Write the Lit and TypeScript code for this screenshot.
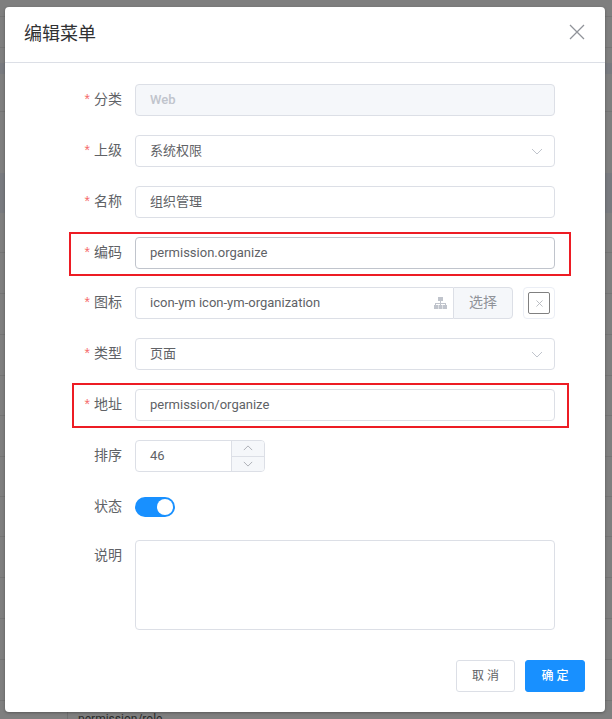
import { LitElement, html, css, svg } from "lit";
import { customElement } from "lit/decorators.js";

const chevronDown = svg`<path d="M1 1l5 5 5-5" fill="none" stroke="currentColor" stroke-width="1"/>`;
const chevronUp = svg`<path d="M1 6l5-5 5 5" fill="none" stroke="currentColor" stroke-width="1"/>`;

/* Rows of the table behind the modal mask: [height, tone] */
const backdropRows: [number, string][] = [
  [17, ""], [31, ""], [15, "plain"], [11, "band"], [38, ""], [61, "plain"], [40, "band"],
  [40, ""], [41, ""], [41, ""], [41, ""], [40, ""], [41, ""], [40, ""], [40, ""], [41, ""],
  [41, ""], [41, ""], [41, ""],
];

@customElement("app-root")
export class AppRoot extends LitElement {
  static styles = css`
    :host {
      display: block;
      position: relative;
      width: 612px;
      height: 719px;
      overflow: hidden;
      background: #7f7f7f;
      font-family: Roboto, "Noto Sans CJK SC", sans-serif;
      font-size: 14px;
      color: #606266;
    }
    * { box-sizing: border-box; }
    .backdrop { display: flex; flex-direction: column; }
    .bg-row { border-bottom: 1px solid #757575; flex: none; }
    .bg-row.plain { border-bottom: none; }
    .bg-row.band { background: #787a7f; border-bottom: none; }
    .bg-text {
      position: absolute; left: 67px; top: 700px; height: 40px;
      border-left: 1px solid #707070;
      padding: 9px 0 0 10px; color: #2a2a2a; font-size: 12px; line-height: 20px;
    }
    .dialog {
      position: absolute; left: 5px; top: 7px; width: 600px; height: 705px;
      background: #fff; border-radius: 4px;
      box-shadow: 0 1px 3px rgba(0, 0, 0, .3);
      display: flex; flex-direction: column;
    }
    .head {
      height: 56px; flex: none; border-bottom: 1px solid #dcdfe6;
      display: flex; align-items: center; justify-content: space-between;
      padding: 0 20px 6px 19px;
    }
    .title { font-size: 18px; line-height: 24px; color: #303133; position: relative; top: 2px; }
    .close { width: 16px; height: 16px; color: #909399; display: block; }
    .form {
      flex: 1; padding: 21px 50px 0 70px;
      display: flex; flex-direction: column; gap: 19px;
    }
    .row { display: flex; align-items: center; min-height: 32px; }
    .row.tight { margin-top: -1px; }
    .label {
      width: 60px; flex: none; padding-right: 13px; text-align: right;
      line-height: 30px; white-space: nowrap; align-self: flex-start;
    }
    .req { color: #f56c6c; margin-right: 4px; font-family: "Liberation Sans", sans-serif; }
    .input {
      flex: 1; min-width: 0; height: 32px; border: 1px solid #dcdfe6; border-radius: 4px;
      padding: 0 15px 0 14px; display: flex; align-items: center; justify-content: space-between;
      font-size: 13px; line-height: 28px; background: #fff; white-space: nowrap;
    }
    .input.disabled { background: #f5f7fa; color: #c0c4cc; font-weight: 500; }
    .input.hover { border-color: #c0c4cc; }
    .chev { width: 12px; height: 7px; color: #c0c4cc; margin-right: -4px; flex: none; display: block; }
    .group { flex: 1; display: flex; min-width: 0; }
    .group .input { border-radius: 4px 0 0 4px; border-right: none; padding-right: 6px; }
    .tree { width: 13px; height: 12px; color: #c0c4cc; flex: none; display: block; }
    .append {
      width: 60px; flex: none; height: 32px; border: 1px solid #dcdfe6; border-radius: 0 4px 4px 0;
      background: #f5f7fa; color: #909399; text-align: center; line-height: 29px;
    }
    .clear {
      width: 32px; height: 32px; flex: none; margin-left: 10px; border: 1px solid #ebeef5; border-radius: 4px;
      display: flex; align-items: center; justify-content: center;
    }
    .clear-inner {
      width: 22px; height: 22px; border: 1px solid #808080; border-radius: 2px;
      display: flex; align-items: center; justify-content: center; color: #b4b7bd;
    }
    .clear svg { width: 7px; height: 7px; display: block; }
    .number {
      width: 130px; height: 32px; border: 1px solid #dcdfe6; border-radius: 4px;
      display: flex; overflow: hidden;
    }
    .number .val { flex: 1; padding-left: 14px; line-height: 29px; font-size: 13px; }
    .steps {
      width: 33px; flex: none; border-left: 1px solid #dcdfe6; background: #f5f7fa;
      display: flex; flex-direction: column;
    }
    .step { flex: 1; display: flex; align-items: center; justify-content: center; color: #a0a3a9; }
    .step + .step { border-top: 1px solid #dcdfe6; }
    .step svg { width: 10px; height: 6px; display: block; }
    .switch {
      width: 40px; height: 20px; border-radius: 10px; background: #1890ff;
      display: flex; align-items: center; justify-content: flex-end; padding-right: 2px;
    }
    .knob { width: 16px; height: 16px; border-radius: 50%; background: #fff; }
    .textarea {
      flex: 1; height: 90px; border: 1px solid #dcdfe6; border-radius: 4px;
    }
    .row.ta { margin-top: -2px; }
    .foot { flex: none; display: flex; justify-content: flex-end; gap: 10px; padding: 0 20px 20px; }
    .btn {
      height: 32px; border-radius: 3px; font-size: 12px; line-height: 30px; text-align: center;
      border: 1px solid #dcdfe6; color: #606266; background: #fff; white-space: pre;
    }
    .btn.cancel { width: 59px; }
    .btn.ok { width: 60px; background: #1890ff; border-color: #1890ff; color: #fff; font-weight: 500; }
    .mark { position: absolute; border: 2px solid #ed1c24; pointer-events: none; }
    .mark.a { left: 64px; top: 225px; width: 502px; height: 44px; }
    .mark.b { left: 67px; top: 376px; width: 497px; height: 45px; }
  `;

  private field(label: string, body: unknown, required = true, cls = "") {
    return html`<div class="row ${cls}">
      <div class="label">${required ? html`<span class="req">*</span>` : ""}${label}</div>
      ${body}
    </div>`;
  }

  private select(text: string) {
    return html`<div class="input"><span>${text}</span>
      <svg class="chev" viewBox="0 0 12 7">${chevronDown}</svg></div>`;
  }

  render() {
    return html`
      <div class="backdrop">
        ${backdropRows.map(
          ([h, tone]) => html`<div class="bg-row ${tone}" style="height:${h}px"></div>`
        )}
      </div>
      <div class="bg-text">permission/role</div>
      <div class="dialog">
        <div class="head">
          <span class="title">编辑菜单</span>
          <svg class="close" viewBox="0 0 16 16">
            <path d="M1 1l14 14M15 1L1 15" fill="none" stroke="currentColor" stroke-width="1.3"/>
          </svg>
        </div>
        <div class="form">
          ${this.field("分类", html`<div class="input disabled">Web</div>`)}
          ${this.field("上级", this.select("系统权限"))}
          ${this.field("名称", html`<div class="input">组织管理</div>`)}
          ${this.field("编码", html`<div class="input hover">permission.organize</div>`)}
          ${this.field(
            "图标",
            html`<div class="group">
                <div class="input">
                  <span>icon-ym icon-ym-organization</span>
                  <svg class="tree" viewBox="0 0 13 12">
                    <path fill="currentColor" d="M4 0h5v4H7v2h5v2h1v4H9V8h2V7H7v1h1.500v4h-4V8H6V7H2v1h2v4H0V8h1V6h5V4H4z"/>
                  </svg>
                </div>
                <div class="append">选择</div>
              </div>
              <div class="clear"><div class="clear-inner">
                <svg viewBox="0 0 8 8"><path d="M.5.5l7 7M7.500.5l-7 7" fill="none" stroke="currentColor" stroke-width="1"/></svg>
              </div></div>`,
            true,
            "tight"
          )}
          ${this.field("类型", this.select("页面"))}
          ${this.field("地址", html`<div class="input">permission/organize</div>`)}
          ${this.field(
            "排序",
            html`<div class="number">
              <div class="val">46</div>
              <div class="steps">
                <div class="step"><svg viewBox="0 0 12 7">${chevronUp}</svg></div>
                <div class="step"><svg viewBox="0 0 12 7">${chevronDown}</svg></div>
              </div>
            </div>`,
            false
          )}
          ${this.field("状态", html`<div class="switch"><div class="knob"></div></div>`, false)}
          ${this.field("说明", html`<div class="textarea"></div>`, false, "ta")}
        </div>
        <div class="foot">
          <div class="btn cancel">取 消</div>
          <div class="btn ok">确 定</div>
        </div>
        <div class="mark a"></div>
        <div class="mark b"></div>
      </div>
    `;
  }
}
